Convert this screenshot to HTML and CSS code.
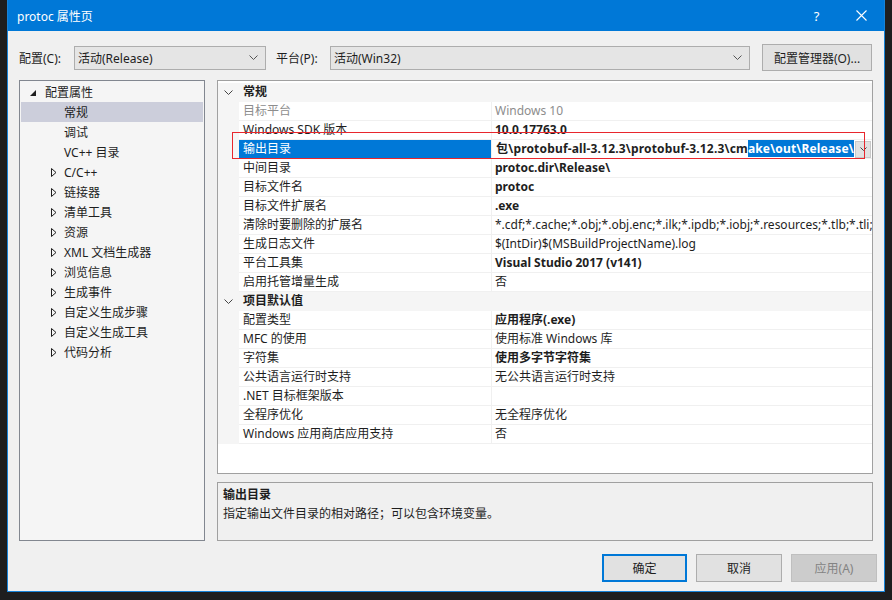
FILE: index.html
```html
<!DOCTYPE html>
<html lang="zh-CN">
<head>
    <meta charset="UTF-8">
    <title>protoc 属性页</title>
    <link rel="stylesheet" href="styles.css">
</head>
<body>
    <div class="window">
        <div class="titlebar">
            <span class="title">protoc 属性页</span>
            <div class="title-btns">
                <span class="tb-btn help">?</span>
                <span class="tb-btn">
                    <svg width="11" height="11" viewBox="0 0 11 11"><path d="M0.5 0.5 L10.5 10.5 M10.5 0.5 L0.5 10.5" stroke="#fff" stroke-width="1.1"/></svg>
                </span>
            </div>
        </div>

        <div class="dialog">
            <div class="config-row">
                <label class="lbl-config">配置(C):</label>
                <div class="combo combo-config">
                    <span>活动(Release)</span>
                    <svg width="9" height="5" viewBox="0 0 9 5"><path d="M0.5 0.5 L4.5 4.5 L8.5 0.5" stroke="#555" fill="none"/></svg>
                </div>
                <label class="lbl-platform">平台(P):</label>
                <div class="combo combo-platform">
                    <span>活动(Win32)</span>
                    <svg width="9" height="5" viewBox="0 0 9 5"><path d="M0.5 0.5 L4.5 4.5 L8.5 0.5" stroke="#555" fill="none"/></svg>
                </div>
                <button class="btn btn-manager">配置管理器(O)...</button>
            </div>

            <div class="main">
                <div class="tree">
                    <div class="tree-item top">
                        <svg class="exp" width="7" height="7" viewBox="0 0 7 7"><path d="M6 0 L6 6 L0 6 Z" fill="#1e1e1e"/></svg>
                        <span>配置属性</span>
                    </div>
                    <div class="tree-item child selected"><span>常规</span></div>
                    <div class="tree-item child"><span>调试</span></div>
                    <div class="tree-item child"><span>VC++ 目录</span></div>
                    <div class="tree-item child"><svg class="exp" width="6" height="9" viewBox="0 0 6 9"><path d="M0.5 0.5 L5 4.5 L0.5 8.5 Z" stroke="#1e1e1e" fill="none"/></svg><span>C/C++</span></div>
                    <div class="tree-item child"><svg class="exp" width="6" height="9" viewBox="0 0 6 9"><path d="M0.5 0.5 L5 4.5 L0.5 8.5 Z" stroke="#1e1e1e" fill="none"/></svg><span>链接器</span></div>
                    <div class="tree-item child"><svg class="exp" width="6" height="9" viewBox="0 0 6 9"><path d="M0.5 0.5 L5 4.5 L0.5 8.5 Z" stroke="#1e1e1e" fill="none"/></svg><span>清单工具</span></div>
                    <div class="tree-item child"><svg class="exp" width="6" height="9" viewBox="0 0 6 9"><path d="M0.5 0.5 L5 4.5 L0.5 8.5 Z" stroke="#1e1e1e" fill="none"/></svg><span>资源</span></div>
                    <div class="tree-item child"><svg class="exp" width="6" height="9" viewBox="0 0 6 9"><path d="M0.5 0.5 L5 4.5 L0.5 8.5 Z" stroke="#1e1e1e" fill="none"/></svg><span>XML 文档生成器</span></div>
                    <div class="tree-item child"><svg class="exp" width="6" height="9" viewBox="0 0 6 9"><path d="M0.5 0.5 L5 4.5 L0.5 8.5 Z" stroke="#1e1e1e" fill="none"/></svg><span>浏览信息</span></div>
                    <div class="tree-item child"><svg class="exp" width="6" height="9" viewBox="0 0 6 9"><path d="M0.5 0.5 L5 4.5 L0.5 8.5 Z" stroke="#1e1e1e" fill="none"/></svg><span>生成事件</span></div>
                    <div class="tree-item child"><svg class="exp" width="6" height="9" viewBox="0 0 6 9"><path d="M0.5 0.5 L5 4.5 L0.5 8.5 Z" stroke="#1e1e1e" fill="none"/></svg><span>自定义生成步骤</span></div>
                    <div class="tree-item child"><svg class="exp" width="6" height="9" viewBox="0 0 6 9"><path d="M0.5 0.5 L5 4.5 L0.5 8.5 Z" stroke="#1e1e1e" fill="none"/></svg><span>自定义生成工具</span></div>
                    <div class="tree-item child"><svg class="exp" width="6" height="9" viewBox="0 0 6 9"><path d="M0.5 0.5 L5 4.5 L0.5 8.5 Z" stroke="#1e1e1e" fill="none"/></svg><span>代码分析</span></div>
                </div>

                <div class="right">
                    <div class="grid">
                        <div class="row cat">
                            <div class="gutter"><svg width="9" height="5" viewBox="0 0 9 5"><path d="M0.5 0.5 L4.5 4.5 L8.5 0.5" stroke="#444" fill="none"/></svg></div>
                            <div class="cat-name">常规</div>
                        </div>
                        <div class="row disabled"><div class="gutter"></div><div class="name">目标平台</div><div class="value">Windows 10</div></div>
                        <div class="row"><div class="gutter"></div><div class="name">Windows SDK 版本</div><div class="value b">10.0.17763.0</div></div>
                        <div class="row active">
                            <div class="gutter"></div>
                            <div class="name">输出目录</div>
                            <div class="value edit">
                                <div class="edit-text"><span class="b path">包\protobuf-all-3.12.3\protobuf-3.12.3\cm<span class="sel">ake\out\Release\</span></span></div>
                                <span class="drop"><svg width="7" height="4" viewBox="0 0 7 4"><path d="M0.5 0.5 L3.5 3.5 L6.5 0.5" stroke="#444" fill="none"/></svg></span>
                            </div>
                        </div>
                        <div class="row"><div class="gutter"></div><div class="name">中间目录</div><div class="value b">protoc.dir\Release\</div></div>
                        <div class="row"><div class="gutter"></div><div class="name">目标文件名</div><div class="value b">protoc</div></div>
                        <div class="row"><div class="gutter"></div><div class="name">目标文件扩展名</div><div class="value b">.exe</div></div>
                        <div class="row"><div class="gutter"></div><div class="name">清除时要删除的扩展名</div><div class="value">*.cdf;*.cache;*.obj;*.obj.enc;*.ilk;*.ipdb;*.iobj;*.resources;*.tlb;*.tli;*.t</div></div>
                        <div class="row"><div class="gutter"></div><div class="name">生成日志文件</div><div class="value">$(IntDir)$(MSBuildProjectName).log</div></div>
                        <div class="row"><div class="gutter"></div><div class="name">平台工具集</div><div class="value b">Visual Studio 2017 (v141)</div></div>
                        <div class="row"><div class="gutter"></div><div class="name">启用托管增量生成</div><div class="value">否</div></div>
                        <div class="row cat">
                            <div class="gutter"><svg width="9" height="5" viewBox="0 0 9 5"><path d="M0.5 0.5 L4.5 4.5 L8.5 0.5" stroke="#444" fill="none"/></svg></div>
                            <div class="cat-name">项目默认值</div>
                        </div>
                        <div class="row"><div class="gutter"></div><div class="name">配置类型</div><div class="value b">应用程序(.exe)</div></div>
                        <div class="row"><div class="gutter"></div><div class="name">MFC 的使用</div><div class="value">使用标准 Windows 库</div></div>
                        <div class="row"><div class="gutter"></div><div class="name">字符集</div><div class="value b">使用多字节字符集</div></div>
                        <div class="row"><div class="gutter"></div><div class="name">公共语言运行时支持</div><div class="value">无公共语言运行时支持</div></div>
                        <div class="row"><div class="gutter"></div><div class="name">.NET 目标框架版本</div><div class="value"></div></div>
                        <div class="row"><div class="gutter"></div><div class="name">全程序优化</div><div class="value">无全程序优化</div></div>
                        <div class="row"><div class="gutter"></div><div class="name">Windows 应用商店应用支持</div><div class="value">否</div></div>

                        <div class="mark"></div>
                    </div>

                    <div class="desc">
                        <div class="desc-title">输出目录</div>
                        <div class="desc-text">指定输出文件目录的相对路径；可以包含环境变量。</div>
                    </div>
                </div>
            </div>

            <div class="actions">
                <button class="btn btn-ok">确定</button>
                <button class="btn">取消</button>
                <button class="btn btn-disabled">应用(A)</button>
            </div>
        </div>
    </div>
</body>
</html>
```

FILE: styles.css
```css
* {
    margin: 0;
    padding: 0;
    box-sizing: border-box;
}

body {
    width: 892px;
    height: 600px;
    overflow: hidden;
    background-color: #1e1e1e;
    font-family: "Noto Sans", "Noto Sans CJK SC", sans-serif;
    font-size: 12px;
    color: #1e1e1e;
}

.window {
    margin-left: 7px;
    width: 878px;
    height: 592px;
    border: 1px solid #1883d7;
    border-top: none;
    background-color: #f0f0f0;
    display: flex;
    flex-direction: column;
}

/* title bar */
.titlebar {
    height: 31px;
    flex-shrink: 0;
    background-color: #0078d7;
    color: #fff;
    display: flex;
    align-items: center;
    padding-left: 9px;
}

.title {
    font-size: 12px;
}

.title-btns {
    margin-left: auto;
    display: flex;
}

.tb-btn {
    width: 45px;
    height: 31px;
    display: flex;
    align-items: center;
    justify-content: center;
}

.tb-btn.help {
    font-size: 13px;
}

/* dialog body */
.dialog {
    flex: 1;
    padding: 13px 7px 0 11px;
    display: flex;
    flex-direction: column;
}

.config-row {
    display: flex;
    align-items: center;
    height: 27px;
}

.lbl-config {
    width: 55px;
}

.lbl-platform {
    width: 54px;
    margin-left: 10px;
}

.combo {
    height: 24px;
    border: 1px solid #adadad;
    background-color: #e5e5e5;
    display: flex;
    align-items: center;
    justify-content: space-between;
    padding: 0 7px 0 3px;
}

.combo-config {
    width: 192px;
}

.combo-platform {
    width: 420px;
}

.btn {
    font-family: inherit;
    font-size: 12px;
    color: #1e1e1e;
    background-color: #e1e1e1;
    border: 1px solid #adadad;
    height: 28px;
    width: 86px;
}

.btn-manager {
    margin-left: 12px;
    width: 110px;
    height: 27px;
}

.main {
    margin-top: 9px;
    display: flex;
    gap: 12px;
    height: 461px;
}

/* left tree */
.tree {
    width: 186px;
    border: 1px solid #828790;
    background-color: #f5f5f5;
    padding-top: 1px;
}

.tree-item {
    height: 20px;
    display: flex;
    align-items: center;
    margin: 0 1px;
    position: relative;
}

.tree-item .exp {
    position: absolute;
}

.tree-item.top {
    padding-left: 24px;
}

.tree-item.top .exp {
    left: 9px;
    top: 8px;
}

.tree-item.child {
    padding-left: 43px;
}

.tree-item.child .exp {
    left: 30px;
    top: 6px;
}

.tree-item.selected {
    background-color: #cccedb;
}

/* property grid */
.right {
    width: 656px;
    display: flex;
    flex-direction: column;
}

.grid {
    height: 394px;
    border: 1px solid #a0a0a0;
    background-color: #fff;
    padding-top: 2px;
    position: relative;
    overflow: hidden;
}

.row {
    display: flex;
    height: 19px;
    line-height: 18px;
}

.gutter {
    width: 21px;
    flex-shrink: 0;
    background-color: #f5f5f5;
    display: flex;
    align-items: center;
    justify-content: center;
}

.row .name {
    width: 253px;
    flex-shrink: 0;
    padding-left: 4px;
    border-right: 1px solid #f0f0f0;
    border-bottom: 1px solid #f0f0f0;
    white-space: nowrap;
    overflow: hidden;
}

.row .value {
    flex: 1;
    min-width: 0;
    padding-left: 3px;
    border-bottom: 1px solid #f0f0f0;
    white-space: nowrap;
    overflow: hidden;
}

.b {
    font-weight: 700;
}

.row.disabled .name,
.row.disabled .value {
    color: #8d8d8d;
}

.row.cat {
    background-color: #f5f5f5;
}

.cat-name {
    padding-left: 4px;
    font-weight: 700;
}

.row.active .name {
    background-color: #0078d7;
    color: #fff;
}

.value.edit {
    display: flex;
    align-items: center;
    padding-right: 1px;
}

.edit-text {
    flex: 1;
    min-width: 0;
    overflow: hidden;
    display: flex;
    justify-content: flex-end;
}

.edit-text > span {
    flex-shrink: 0;
}

.path {
    letter-spacing: 0.17px;
}

.sel {
    background-color: #0078d7;
    color: #fff;
}

.drop {
    width: 16px;
    height: 17px;
    flex-shrink: 0;
    margin-left: 1px;
    background-color: #e1e1e1;
    border: 1px solid #c9c9c9;
    display: flex;
    align-items: center;
    justify-content: center;
}

.mark {
    position: absolute;
    left: 14px;
    top: 51px;
    width: 633px;
    height: 27px;
    border: 1px solid #e8262d;
}

/* description */
.desc {
    margin-top: 8px;
    height: 59px;
    border: 1px solid #a0a0a0;
    background-color: #f0f0f0;
    padding: 2px 5px;
    line-height: 19px;
}

.desc-title {
    font-weight: 700;
}

/* buttons */
.actions {
    margin-top: 13px;
    display: flex;
    justify-content: flex-end;
    gap: 9px;
}

.btn-ok {
    width: 85px;
    border: 2px solid #0078d7;
}

.btn-disabled {
    background-color: #cccccc;
    border-color: #bfbfbf;
    color: #838383;
}
```
